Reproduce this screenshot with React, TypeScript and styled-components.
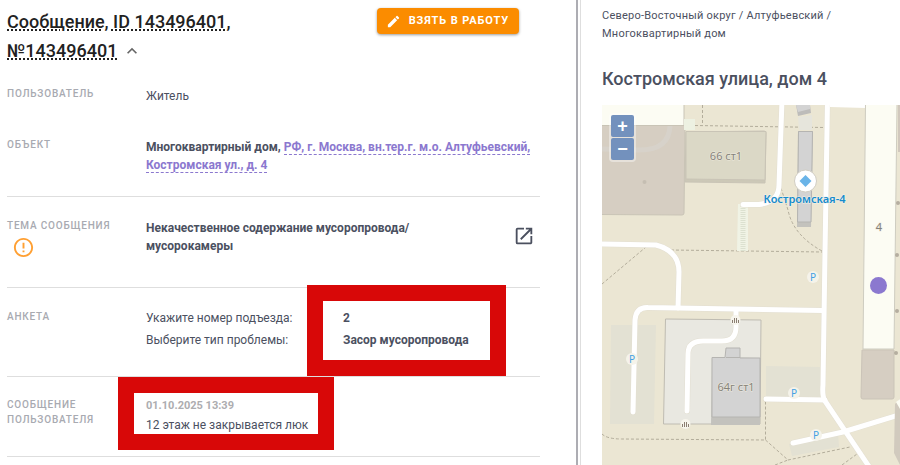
import React from 'react';
import styled, { createGlobalStyle } from 'styled-components';
import { MdEdit, MdErrorOutline, MdExpandLess, MdOpenInNew } from 'react-icons/md';

const GlobalStyle = createGlobalStyle`
  * { box-sizing: border-box; }
  body {
    margin: 0;
    background: #fff;
    color: #4b505f;
    font: 400 12px/18px Roboto, "Liberation Sans", sans-serif;
  }
`;

const Page = styled.div`
  display: grid;
  grid-template-columns: minmax(0, 16fr) minmax(0, 9fr);
  height: 100vh;
  overflow: hidden;
`;

const Message = styled.main`
  padding: 7px 36px 0 7px;
`;

const Header = styled.header`
  display: flex;
  justify-content: space-between;
  align-items: flex-start;
  padding-right: 21px;
`;

const Title = styled.h1`
  display: flex;
  flex-direction: column;
  align-items: flex-start;
  margin: 0;
  color: #222;
  font-size: 18px;
  font-weight: 500;
  line-height: 29px;
`;

const TitleLine = styled.span`
  display: flex;
  align-items: center;
  gap: 5px;
`;

const Dotted = styled.span`
  text-decoration: underline dotted 2px;
`;

const Collapse = styled.button`
  display: flex;
  padding: 0;
  border: 0;
  background: none;
  color: #666;
  font-size: 20px;
`;

const TakeButton = styled.button`
  display: flex;
  align-items: center;
  gap: 8px;
  height: 26px;
  margin-top: 1px;
  padding: 0 10px 0 9px;
  border: 0;
  border-radius: 4px;
  background: #fb8c00;
  box-shadow: 0 1px 3px rgba(0, 0, 0, 0.4);
  color: #fff;
  font: 700 11px/16px Roboto, sans-serif;
  letter-spacing: 0.08em;
  text-transform: uppercase;

  svg { font-size: 15px; }
`;

const Details = styled.dl`
  margin: 0;
`;

const Row = styled.div<{ $top: number; $bottom: number; $line?: boolean }>`
  position: relative;
  display: grid;
  grid-template-columns: 139px minmax(0, 1fr) auto;
  padding: ${(p) => p.$top}px 0 ${(p) => p.$bottom}px;
  border-bottom: ${(p) => (p.$line ? '1px solid #dedede' : '0')};
`;

const Label = styled.dt`
  color: #a8aab1;
  font-size: 10px;
  font-weight: 500;
  line-height: 15px;
  letter-spacing: 0.08em;
  text-transform: uppercase;
`;

const Warning = styled(MdErrorOutline)`
  display: block;
  margin: 3px 0 0 5px;
  color: #ffa033;
  font-size: 23px;
`;

const Value = styled.dd<{ $strong?: boolean }>`
  margin: 0;
  padding-top: 1px;
  font-weight: ${(p) => (p.$strong ? 700 : 400)};
`;

const Address = styled.a`
  border-bottom: 1px dashed #8b78cf;
  color: #8b78cf;
  text-decoration: none;
`;

const OpenLink = styled.a`
  display: flex;
  margin: 7px 5px 0 0;
  align-self: start;
  color: #4b505f;
  font-size: 22px;
`;

const Answers = styled.div`
  display: grid;
  grid-template-columns: 197px minmax(0, 1fr);
  line-height: 22px;
`;

const Stamp = styled.time`
  display: block;
  color: #adadb0;
  font-size: 11px;
  font-weight: 700;
  line-height: 16px;
`;

const Note = styled.span`
  display: block;
  line-height: 22px;
`;

const Frame = styled.div<{ $x: number; $y: number; $w: number; $h: number }>`
  position: absolute;
  left: ${(p) => p.$x}px;
  top: ${(p) => p.$y}px;
  width: ${(p) => p.$w}px;
  height: ${(p) => p.$h}px;
  border: 16px solid #d80808;
  pointer-events: none;
`;

const Side = styled.aside`
  display: flex;
  flex-direction: column;
  flex: 1;
  min-width: 0;
  min-height: 0;
  margin-left: 2px;
  padding: 7px 0 0 21px;
  border-left: 1px solid #dedede;
`;

const SideEdge = styled.div`
  display: flex;
  flex-direction: column;
  min-width: 0;
  border-left: 2px solid #adadb3;
`;

const Crumbs = styled.nav`
  font-size: 11px;
  line-height: 18px;
  letter-spacing: 0.02em;

  a { color: inherit; text-decoration: none; }
`;

const Place = styled.h2`
  margin: 23px 0 14px;
  font-size: 18px;
  font-weight: 500;
  line-height: 25px;
`;

const MapBox = styled.div`
  position: relative;
  flex: 1;
  min-height: 0;

  > svg { display: block; width: 100%; height: 100%; }
`;

const Zoom = styled.div`
  position: absolute;
  left: 7px;
  top: 8px;
  display: grid;
  gap: 1px;
  padding: 2px;
  border-radius: 4px;
  background: rgba(255, 255, 255, 0.4);
`;

const ZoomButton = styled.button`
  width: 23px;
  height: 22px;
  padding: 0;
  border: 0;
  border-radius: 2px;
  background: #7391bd;
  color: #fff;
  font: 700 18px/20px "Liberation Sans", sans-serif;
`;

const parkings = [[813, 277], [632, 359], [794, 393], [816, 435]];
const entrances = [[898, 203], [897, 255], [897, 311], [896, 353]];
const gates = [[735, 320], [685, 424]];

const StreetMap = () => (
  <svg viewBox="602 105 298 360" preserveAspectRatio="xMinYMin slice" role="img" aria-label="Карта">
    <rect x="602" y="105" width="298" height="360" fill="#ebe6d3" />
    <g stroke="#c9c4b6" strokeWidth="1">
      <path d="M601 104H684V126H601Z" fill="#fcfcf3" />
      <path d="M601 125.500H685L684 213Q684 215 682 215L601 214.500Z" fill="#d6cec2" />
      <path d="M686 132L764 131Q766 131 766 133L765 183L685 182Z" fill="#ccc8b7" />
      <path d="M686 131.500L766 131.500L765 180L686 179Z" fill="#dbd8c6" />
    </g>
    <path d="M602 149L637 150Q669 151 670 126" fill="none" stroke="#d7d2ca" strokeWidth="5" />
    <path d="M684 119H695V130H684Z" fill="#edf1e2" />
    <circle cx="644.500" cy="182" r="2" fill="#c5beb2" />
    <g fill="#e3e1d3">
      <path d="M611 325H656L654 424H610Z" />
      <path d="M766 366L820 367V397H766Z" />
      <path d="M789 444L838 432L839 447L792 456Z" />
    </g>
    <g fill="none" stroke="#b3ad9b" strokeWidth="1" strokeDasharray="3 2">
      <path d="M702.500 105V125" />
      <path d="M695 125.500L824 127.500" />
      <path d="M671 250L822 252M602 284L646 247" />
      <path d="M781 188L788 210Q793 235 822 251" />
      <path d="M602 434Q607 439 622 439L765.500 440V402M765.500 440L788 460L850 447M775 465L788 460M842 465L857 454" />
    </g>
    <path d="M738 204H748V251H737Z" fill="#f0f3e5" />
    <path d="M743 206V251" stroke="#dce1d0" strokeWidth="5" strokeDasharray="1 1" />
    <path d="M665.500 319L761 320L760 424L663.500 424Z" fill="#e9e8e1" stroke="#bfbcb2" />
    <path d="M712 357L760 358V425H711Z" fill="#c3c2bd" />
    <path d="M726 348H740V358H760V417H712V357.500H725Z" fill="#d3d3d3" stroke="#b5b4b1" />
    <path d="M726 357.500H740" stroke="#b5b4b1" />
    <path d="M798 117L812 115V130H799Z" fill="#e6e5dc" />
    <path d="M796 105H810L811 113L798 116Z" fill="#bdbcba" />
    <path d="M796 105H810V109L798 112Z" fill="#d3d3d3" />
    <path d="M798 131H813L811 227H797Z" fill="#c3c2bd" />
    <path d="M798.500 131.500H812.500L811 222H797.500Z" fill="#d3d3d3" stroke="#b5b4b1" />
    <g fill="none" strokeLinecap="round" strokeLinejoin="round">
      {[['#e3dfd2', 6], ['#fff', 5]].map(([stroke, strokeWidth]) => (
        <g key={stroke} stroke={String(stroke)} strokeWidth={strokeWidth}>
          <path d="M743 204.500L759 204.500Q779 202 779 185L782 100" />
          <path d="M600 244L656 245Q679 251 679 272L678 308" />
          <path d="M633 412L635 320Q636 307 648 307.500L823 310.500" />
          <path d="M736 311V327Q736 341 722 341H703Q688 341 688 354L687 411" />
          <path d="M827.500 100L825 252L823 385Q822 396 825 401L870 468" />
          <path d="M766 399L825 400M793 443L843 432L902 414" />
        </g>
      ))}
    </g>
    <path d="M830 105H866V108L830 107Z" fill="#fff" />
    <path d="M898 105H900V152H898Z" fill="#d1c8bd" />
    <path d="M865.500 104H897L894 349H863Z" fill="#fcfcf3" stroke="#ceccc0" />
    <path d="M862 350H894V397Q894 399 892 399H863Q861 399 861 397Z" fill="#d6cec2" stroke="#cbc4b8" />
    <path d="M895 404L900 399V465L894 453Z" fill="#d1cabe" />
    <path d="M896 402L900 399V409Z" fill="#fcfcf3" />
    {entrances.map(([x, y]) => <circle key={y} cx={x} cy={y} r="2" fill="#b5aea0" />)}
    {gates.map(([x, y]) => (
      <g key={x} fill="none">
        <circle cx={x + 0.5} cy={y} r="5" fill="#f7f5ed" />
        <path
          d={`M${x - 2.5} ${y + 3}v-3M${x - 0.5} ${y + 3}v-5M${x + 1.5} ${y + 3}v-5M${x + 3.5} ${y + 3}v-3`}
          stroke="#8b7e72"
        />
      </g>
    ))}
    <g fontFamily='"Noto Sans", sans-serif' textAnchor="middle">
      {parkings.map(([x, y]) => (
        <g key={x}>
          <circle cx={x} cy={y} r="6" fill="#f5f3ea" />
          <text x={x} y={y + 4} fontSize="10" fill="#42a1e4">P</text>
        </g>
      ))}
      <g fontSize="11" fill="#85827a" stroke="#eeeade" strokeWidth="1" paintOrder="stroke">
        <text x="726" y="160">66 ст1</text>
        <text x="736" y="391">64г ст1</text>
        <text x="879" y="231">4</text>
      </g>
      <circle cx="805.500" cy="181" r="11" fill="#fff" stroke="#d1cdc2" />
      <path d="M805.500 175L811.500 181L805.500 187L799.500 181Z" fill="#6ab4e8" />
      <text x="804.500" y="203" fontSize="11" fontWeight="600" fill="#168bcd" stroke="#f3f1e8" strokeWidth="1" paintOrder="stroke">
        Костромская-4
      </text>
    </g>
    <circle cx="878.500" cy="285.500" r="8.500" fill="#8b78cf" />
  </svg>
);

export default function App() {
  return (
    <>
      <GlobalStyle />
      <Page>
        <Message>
          <Header>
            <Title>
              <TitleLine><Dotted>Сообщение, ID 143496401,</Dotted></TitleLine>
              <TitleLine>
                <Dotted>№143496401</Dotted>
                <Collapse type="button" aria-label="Свернуть"><MdExpandLess /></Collapse>
              </TitleLine>
            </Title>
            <TakeButton type="button"><MdEdit />Взять в работу</TakeButton>
          </Header>
          <Details>
            <Row $top={21} $bottom={11}>
              <Label>Пользователь</Label>
              <Value>Житель</Value>
            </Row>
            <Row $top={21} $bottom={22} $line>
              <Label>Объект</Label>
              <Value $strong>
                Многоквартирный дом,{' '}
                <Address href="#object">РФ, г. Москва, вн.тер.г. м.о. Алтуфьевский, Костромская ул., д. 4</Address>
              </Value>
            </Row>
            <Row $top={21} $bottom={28} $line>
              <Label>Тема сообщения<Warning /></Label>
              <Value $strong>
                Некачественное содержание мусоропровода/<br />мусорокамеры
              </Value>
              <OpenLink href="#topic" aria-label="Открыть тему"><MdOpenInNew /></OpenLink>
            </Row>
            <Row $top={18} $bottom={25} $line>
              <Label>
                <Note>Анкета</Note>
              </Label>
              <Value>
                <Answers>
                  <span>Укажите номер подъезда:</span><strong>2</strong>
                  <span>Выберите тип проблемы:</span><strong>Засор мусоропровода</strong>
                </Answers>
              </Value>
              <Frame $x={300} $y={-3} $w={199} $h={91} />
            </Row>
            <Row $top={20} $bottom={20} $line>
              <Label>Сообщение<br />пользователя</Label>
              <Value>
                <Stamp dateTime="2025-10-01T13:39">01.10.2025 13:39</Stamp>
                <Note>12 этаж не закрывается люк</Note>
              </Value>
              <Frame $x={111} $y={0} $w={216} $h={73} />
            </Row>
          </Details>
        </Message>
        <SideEdge>
          <Side>
            <Crumbs aria-label="Адрес">
              <a href="#district">Северо-Восточный округ</a> / <a href="#area">Алтуфьевский</a> /<br />
              <a href="#type">Многоквартирный дом</a>
            </Crumbs>
            <Place>Костромская улица, дом 4</Place>
            <MapBox>
              <StreetMap />
              <Zoom>
                <ZoomButton type="button" aria-label="Приблизить">+</ZoomButton>
                <ZoomButton type="button" aria-label="Отдалить">−</ZoomButton>
              </Zoom>
            </MapBox>
          </Side>
        </SideEdge>
      </Page>
    </>
  );
}
